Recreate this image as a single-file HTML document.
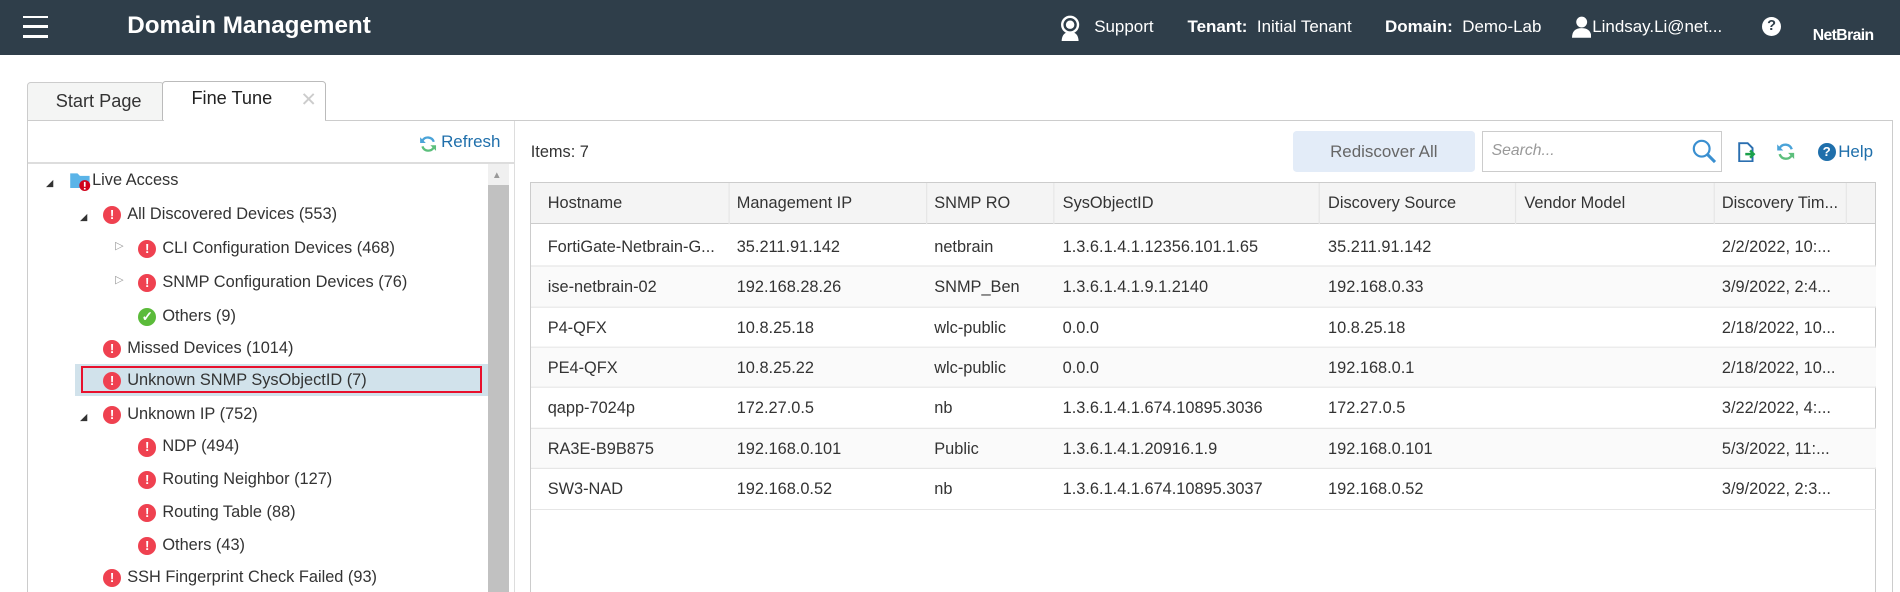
<!DOCTYPE html>
<html><head><meta charset="utf-8"><style>
*{box-sizing:border-box;margin:0;padding:0}
html,body{width:1900px;height:592px;overflow:hidden;background:#fff}
#w{zoom:1.21173;width:1568px;height:489px;position:relative;font-family:"Liberation Sans",sans-serif;color:#333;font-size:13.5px}
.a{position:absolute;white-space:nowrap}
.hdr{left:0;top:0;width:1568px;height:45px;background:#2f3e4a;color:#fff}
.ex{display:inline-block;width:15px;height:15px;border-radius:50%;background:#ef4150;color:#fff;font-weight:bold;font-size:11px;text-align:center;line-height:15px;vertical-align:0px;margin-right:5px}
.ok{background:#5bbb3a}
.tri{font-size:8px;color:#333}
.th{top:151px;height:34px;background:#f4f4f4}
</style></head><body><div id="w">
<div class="a hdr">
 <div class="a" style="left:19px;top:13px;width:21px;height:2px;background:#fff"></div>
 <div class="a" style="left:19px;top:21px;width:21px;height:2px;background:#fff"></div>
 <div class="a" style="left:19px;top:29px;width:21px;height:2px;background:#fff"></div>
 <div class="a" style="left:105px;top:10px;font-size:20px;font-weight:bold">Domain Management</div>
 <svg class="a" style="left:873px;top:12px" width="20" height="22" viewBox="0 0 20 22"><circle cx="10" cy="8" r="6.5" fill="none" stroke="#fff" stroke-width="2"/><circle cx="10" cy="8" r="3.5" fill="#fff"/><path d="M3 22 Q3 14 10 14 Q17 14 17 22Z" fill="#fff"/></svg>
 <div class="a" style="left:903px;top:14px;font-size:14px">Support</div>
 <div class="a" style="left:980px;top:14px;font-size:14px"><b>Tenant:</b>&nbsp; Initial Tenant</div>
 <div class="a" style="left:1143px;top:14px;font-size:14px"><b>Domain:</b>&nbsp; Demo-Lab</div>
 <svg class="a" style="left:1297px;top:13px" width="16" height="18" viewBox="0 0 16 18"><circle cx="8" cy="5" r="4.5" fill="#fff"/><path d="M0 18 Q0 10 8 10 Q16 10 16 18Z" fill="#fff"/></svg>
 <div class="a" style="left:1314px;top:14px;font-size:14px">Lindsay.Li@net...</div>
 <div class="a" style="left:1454px;top:14px;width:16px;height:16px;border-radius:50%;background:#fff;color:#2f3e4a;font-weight:bold;font-size:12px;text-align:center;line-height:16px">?</div>
 <div class="a" style="left:1496px;top:22px;font-size:13px;font-weight:bold;letter-spacing:-0.5px">NetBrain</div>
</div>
<div class="a" style="left:22px;top:68px;width:113px;height:32px;background:#f4f5f4;border:1px solid #ccc;border-bottom:none;border-radius:3px 3px 0 0"></div>
<div class="a" style="left:46px;top:75px;font-size:15px">Start Page</div>
<div class="a" style="left:134px;top:67px;width:135px;height:33px;background:#fff;border:1px solid #bbb;border-bottom:none;border-radius:3px 3px 0 0"></div>
<div class="a" style="left:158px;top:73px;font-size:15px;color:#222">Fine Tune</div>
<div class="a" style="left:248px;top:73px;font-size:16px;color:#ccc">✕</div>
<div class="a" style="left:22px;top:99px;width:1540px;height:400px;border:1px solid #ccc"></div>
<div class="a" style="left:135px;top:99px;width:133px;height:2px;background:#fff"></div>
<div class="a" style="left:424px;top:100px;width:1px;height:389px;background:#ddd"></div>
<div class="a" style="left:23px;top:134px;width:401px;height:1px;background:#ddd"></div>
<svg class="a" style="left:346px;top:111px" width="15" height="15" viewBox="0 0 16 16"><path d="M13 6A5.5 5.5 0 0 0 3 5" fill="none" stroke="#4aa3d8" stroke-width="2"/><path d="M3 10A5.5 5.5 0 0 0 13 11" fill="none" stroke="#5cbf7c" stroke-width="2"/><path d="M1 2v5h5z" fill="#4aa3d8"/><path d="M15 14v-5h-5z" fill="#5cbf7c"/></svg>
<div class="a" style="left:364px;top:109px;font-size:14px;color:#1f6fab">Refresh</div>
<div class="a" style="left:403px;top:135px;width:17px;height:354px;background:#f0f0f0"></div>
<div class="a" style="left:403px;top:153px;width:17px;height:336px;background:#c1c1c1"></div>
<div class="a" style="left:406px;top:140px;font-size:8px;color:#999">▲</div>
<div class="a" style="left:62px;top:300px;width:341px;height:27px;background:#d1e2eb"></div>
<div class="a" style="left:67px;top:302px;width:331px;height:22px;border:2px solid #e8112d"></div>
<div class="a" style="left:38px;top:142px"><span class="tri">◢</span></div>
<svg class="a" style="left:57px;top:141px" width="19" height="17" viewBox="0 0 19 17"><path d="M1 2h6l2 2h8v10H1z" fill="#5ab4e8"/><circle cx="13" cy="12" r="4.5" fill="#d0021b"/><rect x="12.3" y="9" width="1.4" height="4" fill="#fff"/><rect x="12.3" y="14" width="1.4" height="1.3" fill="#fff"/></svg>
<div class="a" style="left:76px;top:141px">Live Access</div>
<div class="a" style="left:66px;top:170px"><span class="tri">◢</span></div>
<div class="a" style="left:85px;top:169px"><span class="ex">!</span>All Discovered Devices (553)</div>
<div class="a" style="left:95px;top:197px;font-size:9px;color:#999">▷</div>
<div class="a" style="left:114px;top:197px"><span class="ex">!</span>CLI Configuration Devices (468)</div>
<div class="a" style="left:95px;top:225px;font-size:9px;color:#999">▷</div>
<div class="a" style="left:114px;top:225px"><span class="ex">!</span>SNMP Configuration Devices (76)</div>
<div class="a" style="left:114px;top:253px"><span class="ex ok">✓</span>Others (9)</div>
<div class="a" style="left:85px;top:280px"><span class="ex">!</span>Missed Devices (1014)</div>
<div class="a" style="left:85px;top:306px"><span class="ex">!</span>Unknown SNMP SysObjectID (7)</div>
<div class="a" style="left:66px;top:335px"><span class="tri">◢</span></div>
<div class="a" style="left:85px;top:334px"><span class="ex">!</span>Unknown IP (752)</div>
<div class="a" style="left:114px;top:361px"><span class="ex">!</span>NDP (494)</div>
<div class="a" style="left:114px;top:388px"><span class="ex">!</span>Routing Neighbor (127)</div>
<div class="a" style="left:114px;top:415px"><span class="ex">!</span>Routing Table (88)</div>
<div class="a" style="left:114px;top:442px"><span class="ex">!</span>Others (43)</div>
<div class="a" style="left:85px;top:469px"><span class="ex">!</span>SSH Fingerprint Check Failed (93)</div>
<div class="a" style="left:438px;top:118px">Items: 7</div>
<div class="a" style="left:1067px;top:108px;width:150px;height:34px;background:#e3ecf8;border-radius:3px;text-align:center;line-height:34px;font-size:14px;color:#666">Rediscover All</div>
<div class="a" style="left:1223px;top:108px;width:198px;height:34px;border:1px solid #ccc"></div>
<div class="a" style="left:1231px;top:117px;font-style:italic;color:#999;font-size:13px">Search...</div>
<svg class="a" style="left:1396px;top:115px" width="21" height="21" viewBox="0 0 21 21"><circle cx="8" cy="8" r="6.5" fill="none" stroke="#3a8fd0" stroke-width="1.8"/><path d="M13 13l6 6" stroke="#3a8fd0" stroke-width="2.5"/></svg>
<svg class="a" style="left:1434px;top:117px" width="16" height="17" viewBox="0 0 16 17"><path d="M1 1h7l4 4v11H1z" fill="none" stroke="#2b6fb0" stroke-width="1.6"/><path d="M6 10h6M10 7l3 3-3 3" stroke="#1aa04a" stroke-width="2" fill="none"/></svg>
<svg class="a" style="left:1466px;top:117px" width="16" height="16" viewBox="0 0 16 16"><path d="M13 6A5.5 5.5 0 0 0 3 5" fill="none" stroke="#4aa3d8" stroke-width="2"/><path d="M3 10A5.5 5.5 0 0 0 13 11" fill="none" stroke="#5cbf7c" stroke-width="2"/><path d="M1 2v5h5z" fill="#4aa3d8"/><path d="M15 14v-5h-5z" fill="#5cbf7c"/></svg>
<div class="a" style="left:1500px;top:118px;width:15px;height:15px;border-radius:50%;background:#1f6fab;color:#fff;font-weight:bold;font-size:11px;text-align:center;line-height:15px">?</div>
<div class="a" style="left:1517px;top:117px;font-size:14px;color:#1f6fab">Help</div>
<div class="a" style="left:437px;top:150px;width:1111px;height:340px;border:1px solid #ccc;border-bottom:none"></div>
<div class="a th" style="left:438px;width:1109px;border-bottom:1px solid #ccc"></div>
<svg class="a" style="left:438px;top:151px" width="1110" height="270">
<rect x="0" y="69" width="1110" height="33" fill="#fafafa"/><rect x="0" y="136" width="1110" height="32" fill="#fafafa"/><rect x="0" y="203" width="1110" height="32" fill="#fafafa"/>
<g stroke="#e6e6e6"><line x1="163.5" y1="0" x2="163.5" y2="34"/><line x1="326.5" y1="0" x2="326.5" y2="34"/><line x1="431.5" y1="0" x2="431.5" y2="34"/><line x1="650.5" y1="0" x2="650.5" y2="34"/><line x1="812.5" y1="0" x2="812.5" y2="34"/><line x1="976.5" y1="0" x2="976.5" y2="34"/><line x1="1085.5" y1="0" x2="1085.5" y2="34"/>
<line x1="0" y1="68.5" x2="1110" y2="68.5"/><line x1="0" y1="102.5" x2="1110" y2="102.5"/><line x1="0" y1="135.5" x2="1110" y2="135.5"/><line x1="0" y1="168.5" x2="1110" y2="168.5"/><line x1="0" y1="202.5" x2="1110" y2="202.5"/><line x1="0" y1="235.5" x2="1110" y2="235.5"/><line x1="0" y1="269.5" x2="1110" y2="269.5"/></g>
</svg>
<div class="a" style="left:452px;top:160px">Hostname</div>
<div class="a" style="left:608px;top:160px">Management IP</div>
<div class="a" style="left:771px;top:160px">SNMP RO</div>
<div class="a" style="left:877px;top:160px">SysObjectID</div>
<div class="a" style="left:1096px;top:160px">Discovery Source</div>
<div class="a" style="left:1258px;top:160px">Vendor Model</div>
<div class="a" style="left:1421px;top:160px">Discovery Tim...</div>
<div class="a" style="left:452px;top:187px;line-height:33.4px">FortiGate-Netbrain-G...<br>ise-netbrain-02<br>P4-QFX<br>PE4-QFX<br>qapp-7024p<br>RA3E-B9B875<br>SW3-NAD</div>
<div class="a" style="left:608px;top:187px;line-height:33.4px">35.211.91.142<br>192.168.28.26<br>10.8.25.18<br>10.8.25.22<br>172.27.0.5<br>192.168.0.101<br>192.168.0.52</div>
<div class="a" style="left:771px;top:187px;line-height:33.4px">netbrain<br>SNMP_Ben<br>wlc-public<br>wlc-public<br>nb<br>Public<br>nb</div>
<div class="a" style="left:877px;top:187px;line-height:33.4px">1.3.6.1.4.1.12356.101.1.65<br>1.3.6.1.4.1.9.1.2140<br>0.0.0<br>0.0.0<br>1.3.6.1.4.1.674.10895.3036<br>1.3.6.1.4.1.20916.1.9<br>1.3.6.1.4.1.674.10895.3037</div>
<div class="a" style="left:1096px;top:187px;line-height:33.4px">35.211.91.142<br>192.168.0.33<br>10.8.25.18<br>192.168.0.1<br>172.27.0.5<br>192.168.0.101<br>192.168.0.52</div>
<div class="a" style="left:1421px;top:187px;line-height:33.4px">2/2/2022, 10:...<br>3/9/2022, 2:4...<br>2/18/2022, 10...<br>2/18/2022, 10...<br>3/22/2022, 4:...<br>5/3/2022, 11:...<br>3/9/2022, 2:3...</div>
</div></body></html>
